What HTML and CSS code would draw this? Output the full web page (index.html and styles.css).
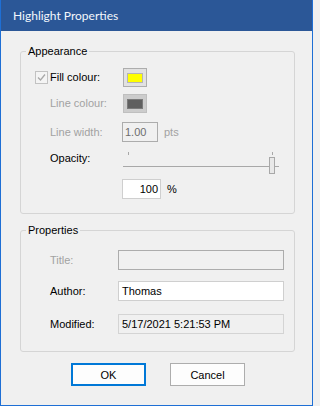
FILE: index.html
```html
<!DOCTYPE html>
<html>
<head>
<meta charset="utf-8">
<title>Highlight Properties</title>
<link rel="stylesheet" href="styles.css">
</head>
<body>
<div class="window">
  <div class="titlebar">Highlight Properties</div>
  <div class="client">
    <fieldset class="group group-appearance">
      <legend>Appearance</legend>
      <div class="row row-fill">
        <span class="check"><svg width="11" height="11" viewBox="0 0 11 11"><path d="M2 5.5 L4.5 8 L9 2.5" fill="none" stroke="#a8a8a8" stroke-width="1.3"/></svg></span>
        <span class="lbl lbl-check">Fill colour:</span>
        <span class="colour-btn"><span class="swatch swatch-yellow"></span></span>
      </div>
      <div class="row row-line">
        <span class="lbl disabled">Line colour:</span>
        <span class="colour-btn colour-btn-disabled"><span class="swatch swatch-grey"></span></span>
      </div>
      <div class="row row-width">
        <span class="lbl disabled">Line width:</span>
        <span class="tbox tbox-small tbox-disabled">1.00</span>
        <span class="unit disabled">pts</span>
      </div>
      <div class="row row-opacity">
        <span class="lbl lbl-opacity">Opacity:</span>
        <div class="trackbar">
          <span class="tick tick-left"></span>
          <span class="tick tick-right"></span>
          <span class="track"></span>
          <span class="thumb"></span>
        </div>
      </div>
      <div class="row row-percent">
        <span class="lbl"></span>
        <span class="tbox tbox-num">100</span>
        <span class="unit">%</span>
      </div>
    </fieldset>

    <fieldset class="group group-props">
      <legend>Properties</legend>
      <div class="row row-title">
        <span class="lbl lbl-prop disabled">Title:</span>
        <span class="tbox tbox-wide tbox-disabled"></span>
      </div>
      <div class="row row-author">
        <span class="lbl lbl-prop">Author:</span>
        <span class="tbox tbox-wide">Thomas</span>
      </div>
      <div class="row row-modified">
        <span class="lbl lbl-prop">Modified:</span>
        <span class="tbox tbox-wide tbox-readonly">5/17/2021 5:21:53 PM</span>
      </div>
    </fieldset>

    <div class="buttons">
      <button class="btn btn-default">OK</button>
      <button class="btn">Cancel</button>
    </div>
  </div>
</div>
</body>
</html>
```

FILE: styles.css
```css
html, body {
  margin: 0;
  padding: 0;
  background: #f0f0f0;
  overflow: hidden;
}

.window {
  width: 313px;
  height: 406px;
  box-sizing: border-box;
  border: 1px solid #1e6fd5;
  border-top: none;
  background: #f0f0f0;
  font-family: "Liberation Sans", Arial, sans-serif;
  font-size: 11px;
  color: #000;
  display: flex;
  flex-direction: column;
  overflow: hidden;
}

.titlebar {
  height: 31px;
  flex: none;
  background: #2b5797;
  color: #f4f7fc;
  font-family: Lato, "Noto Sans", sans-serif;
  font-size: 12px;
  line-height: 31px;
  padding-left: 12px;
  box-sizing: border-box;
}

.client {
  padding: 0 17px 0 19px;
  display: flex;
  flex-direction: column;
}

.group {
  margin: 0;
  padding: 0;
  border: 1px solid #d5d5d5;
  border-radius: 3px;
  min-width: 0;
}

.group legend {
  margin-left: 5px;
  padding: 0 2px;
  line-height: 14px;
  font-size: 11px;
}

.group-appearance {
  margin-top: 13px;
  padding-top: 10px;
  padding-bottom: 14px;
}

.group-props {
  margin-top: 9px;
  padding-top: 13px;
  padding-bottom: 17px;
}

.row {
  display: flex;
  align-items: center;
}

.lbl {
  width: 72px;
  margin-left: 29px;
  flex: none;
  line-height: 13px;
  white-space: nowrap;
}

.lbl-check {
  margin-left: 2px;
}

.lbl-prop {
  width: 68px;
}

.disabled {
  color: #a2a2a2;
}

.row-fill { height: 19px; }
.row-line { height: 19px; margin-top: 7px; }
.row-width { height: 20px; margin-top: 9px; }
.row-opacity { height: 25px; margin-top: 8px; align-items: flex-start; }
.row-percent { height: 20px; margin-top: 4px; }

.row-title { height: 20px; }
.row-author { height: 20px; margin-top: 11px; }
.row-modified { height: 20px; margin-top: 13px; }

.lbl-opacity {
  margin-top: 2px;
}

.check {
  width: 13px;
  height: 13px;
  margin-left: 14px;
  box-sizing: border-box;
  border: 1px solid #c2c2c2;
  background: #f4f4f4;
  display: flex;
  align-items: center;
  justify-content: center;
  flex: none;
}

.colour-btn {
  width: 24px;
  height: 19px;
  margin-left: 1px;
  box-sizing: border-box;
  border: 1px solid #adadad;
  background: #e1e1e1;
  display: flex;
  align-items: center;
  justify-content: center;
}

.colour-btn-disabled {
  background: #cccccc;
  border-color: #bfbfbf;
}

.swatch {
  width: 16px;
  height: 10px;
  box-sizing: border-box;
  border: 1px solid #b4b4b4;
}

.swatch-yellow { background: #ffff00; }
.swatch-grey { background: #5f5f5f; border-color: #7a7a7a; }

.tbox {
  height: 20px;
  box-sizing: border-box;
  border: 1px solid #cfcfcf;
  background: #fff;
  line-height: 18px;
  padding: 0 3px;
  white-space: nowrap;
  flex: none;
}

.tbox-small {
  width: 36px;
  padding-left: 2px;
}

.tbox-num {
  width: 39px;
  text-align: right;
  padding-right: 2px;
}

.tbox-disabled {
  background: #f0f0f0;
  border-color: #acacac;
  color: #6d6d6d;
}

.tbox-readonly {
  background: #f0f0f0;
  border-color: #d4d4d4;
}

.tbox-wide {
  width: 166px;
}

.unit {
  margin-left: 6px;
}

.trackbar {
  position: relative;
  width: 156px;
  height: 25px;
  margin-left: 1px;
}

.tick {
  position: absolute;
  top: 2px;
  width: 1px;
  height: 3px;
  background: #a8a8a8;
}

.tick-left { left: 5px; }
.tick-right { left: 149px; }

.track {
  position: absolute;
  left: 0;
  right: 0;
  top: 16px;
  height: 1px;
  background: #a8a8a8;
}

.thumb {
  position: absolute;
  left: 146px;
  top: 7px;
  width: 6px;
  height: 17px;
  box-sizing: border-box;
  border: 1px solid #a8a8a8;
  background: #e8e8e8;
}

.buttons {
  display: flex;
  justify-content: center;
  gap: 24px;
  margin-top: 11px;
  padding-left: 1px;
}

.btn {
  width: 75px;
  height: 23px;
  box-sizing: border-box;
  border: 1px solid #adadad;
  background: #fdfdfd;
  font-family: "Liberation Sans", Arial, sans-serif;
  font-size: 11px;
  color: #000;
  padding: 0;
  margin: 0;
}

.btn-default {
  border: 2px solid #0078d7;
}
```
